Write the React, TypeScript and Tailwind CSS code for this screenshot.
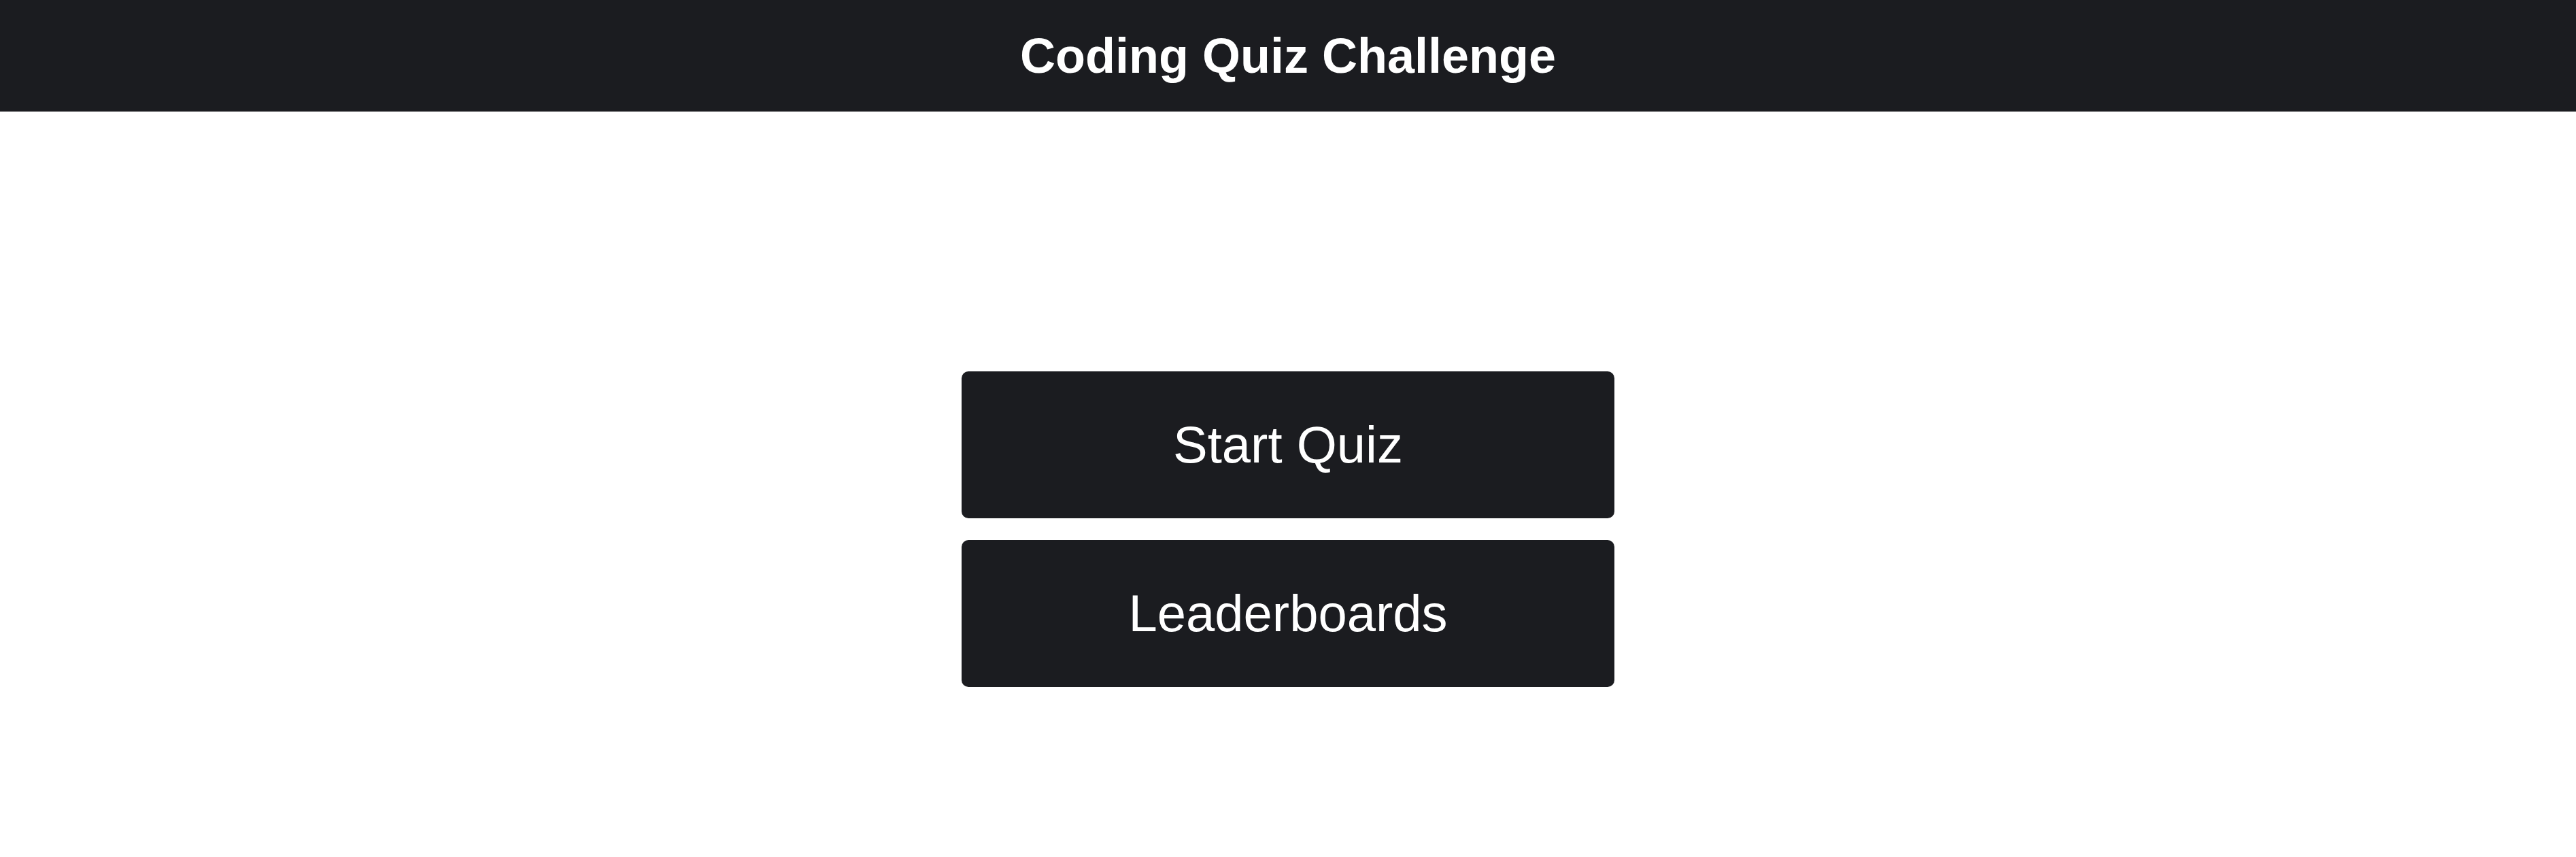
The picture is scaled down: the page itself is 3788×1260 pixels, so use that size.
export default function App() {
  return (
    <div className="min-h-screen w-full bg-white" style={{ fontFamily: '"Liberation Sans", Arial, sans-serif' }}>
      <header className="flex h-[164px] items-center justify-center bg-[#1b1c20]">
        <h1 className="text-[72px] font-bold leading-none text-white">Coding Quiz Challenge</h1>
      </header>
      <main className="flex flex-col items-center gap-[32px] pt-[382px]">
        <button className="flex h-[216px] w-[960px] items-center justify-center rounded-[10px] bg-[#1b1c20] text-[76px] leading-none text-white">
          Start Quiz
        </button>
        <button className="flex h-[216px] w-[960px] items-center justify-center rounded-[10px] bg-[#1b1c20] text-[76px] leading-none text-white">
          Leaderboards
        </button>
      </main>
    </div>
  );
}
